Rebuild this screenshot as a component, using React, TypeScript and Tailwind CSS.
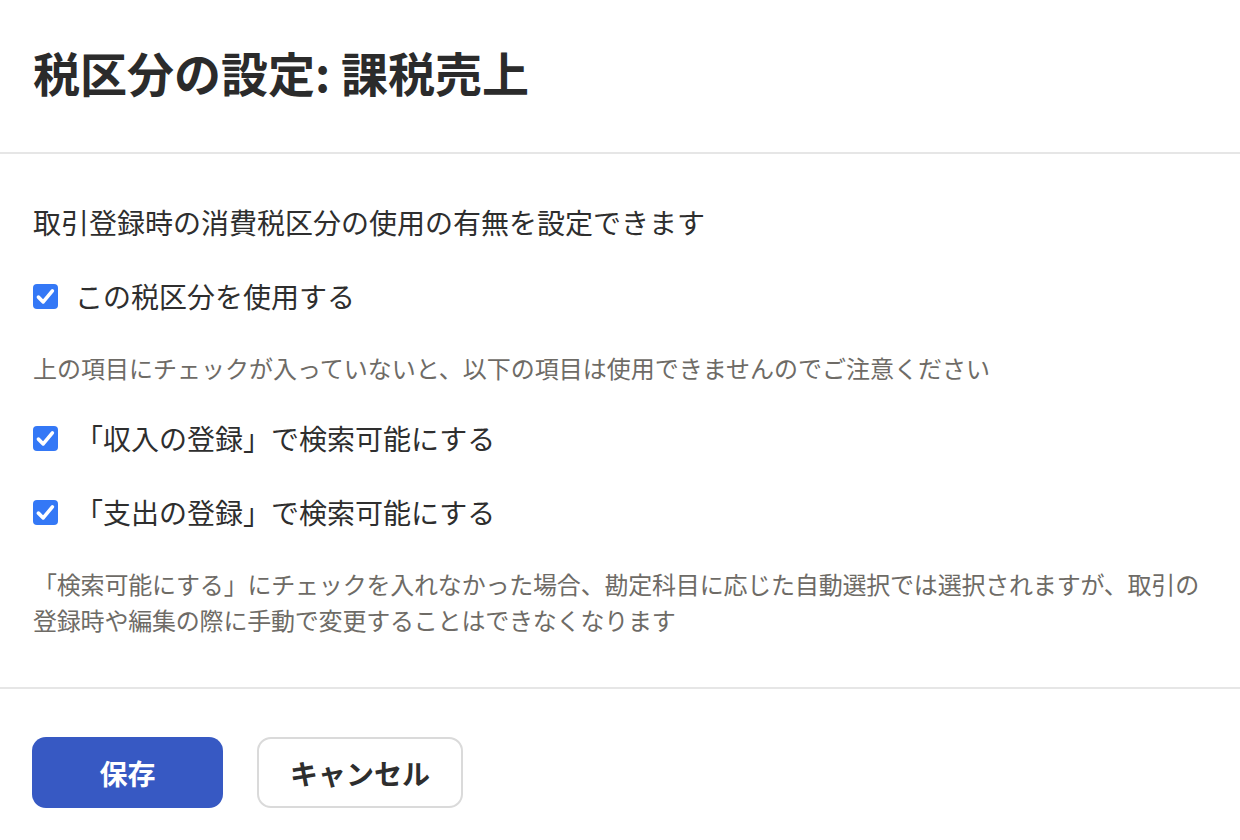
import React, { useState } from "react";

function CheckRow({ label, checked, onToggle }: { label: string; checked: boolean; onToggle: () => void }) {
  return (
    <label className="flex h-[40px] cursor-pointer items-center gap-[17px]" onClick={onToggle}>
      <span
        className={
          checked
            ? "flex h-[25px] w-[25px] shrink-0 items-center justify-center rounded-[4px] bg-[#3478f6]"
            : "flex h-[25px] w-[25px] shrink-0 items-center justify-center rounded-[4px] border-2 border-[#8a8a8a] bg-white"
        }
      >
        {checked && (
          <svg width="25" height="25" viewBox="0 0 24 24" fill="none">
            <path d="M5.2 12.6 L9.8 17.2 L18.6 6.6" stroke="white" strokeWidth="3.4" strokeLinecap="round" strokeLinejoin="round" />
          </svg>
        )}
      </span>
      <span className="text-[28px] leading-[40px] text-[#2e2e2e]">{label}</span>
    </label>
  );
}

export default function App() {
  const [useTax, setUseTax] = useState(true);
  const [income, setIncome] = useState(true);
  const [expense, setExpense] = useState(true);

  return (
    <div
      className="min-h-[840px] w-[1240px] bg-white"
      style={{ fontFamily: '"Noto Sans CJK JP", "Noto Sans", sans-serif' }}
    >
      <header className="h-[154px] border-b-2 border-[#e6e6e6] px-[33px] pt-[40px]">
        <h1 className="text-[47px] font-bold leading-[64px] text-[#2b2b2b]">税区分の設定: 課税売上</h1>
      </header>

      <div className="flex flex-col gap-[34px] border-b-2 border-[#e6e6e6] px-[33px] pb-[49px] pt-[48px]">
        <p className="text-[28px] leading-[40px] text-[#2e2e2e]">取引登録時の消費税区分の使用の有無を設定できます</p>
        <CheckRow label="この税区分を使用する" checked={useTax} onToggle={() => setUseTax(!useTax)} />
        <p className="text-[24px] leading-[36px] text-[#6e6b66]">
          上の項目にチェックが入っていないと、以下の項目は使用できませんのでご注意ください
        </p>
        <div className="-mt-[2px]">
          <CheckRow label="「収入の登録」で検索可能にする" checked={income} onToggle={() => setIncome(!income)} />
        </div>
        <CheckRow label="「支出の登録」で検索可能にする" checked={expense} onToggle={() => setExpense(!expense)} />
        <p className="whitespace-nowrap text-[24px] leading-[36px] tracking-[-0.2px] text-[#6e6b66]">
          「検索可能にする」にチェックを入れなかった場合、勘定科目に応じた自動選択では選択されますが、取引の
          <br />
          登録時や編集の際に手動で変更することはできなくなります
        </p>
      </div>

      <footer className="flex gap-[34px] px-[32px] pt-[48px]">
        <button className="h-[71px] w-[191px] rounded-[14px] bg-[#3759c3] text-[28px] font-bold text-white">保存</button>
        <button className="h-[71px] w-[206px] rounded-[14px] border-2 border-[#dadada] bg-white text-[28px] font-bold text-[#2e2e2e]">
          キャンセル
        </button>
      </footer>
    </div>
  );
}
